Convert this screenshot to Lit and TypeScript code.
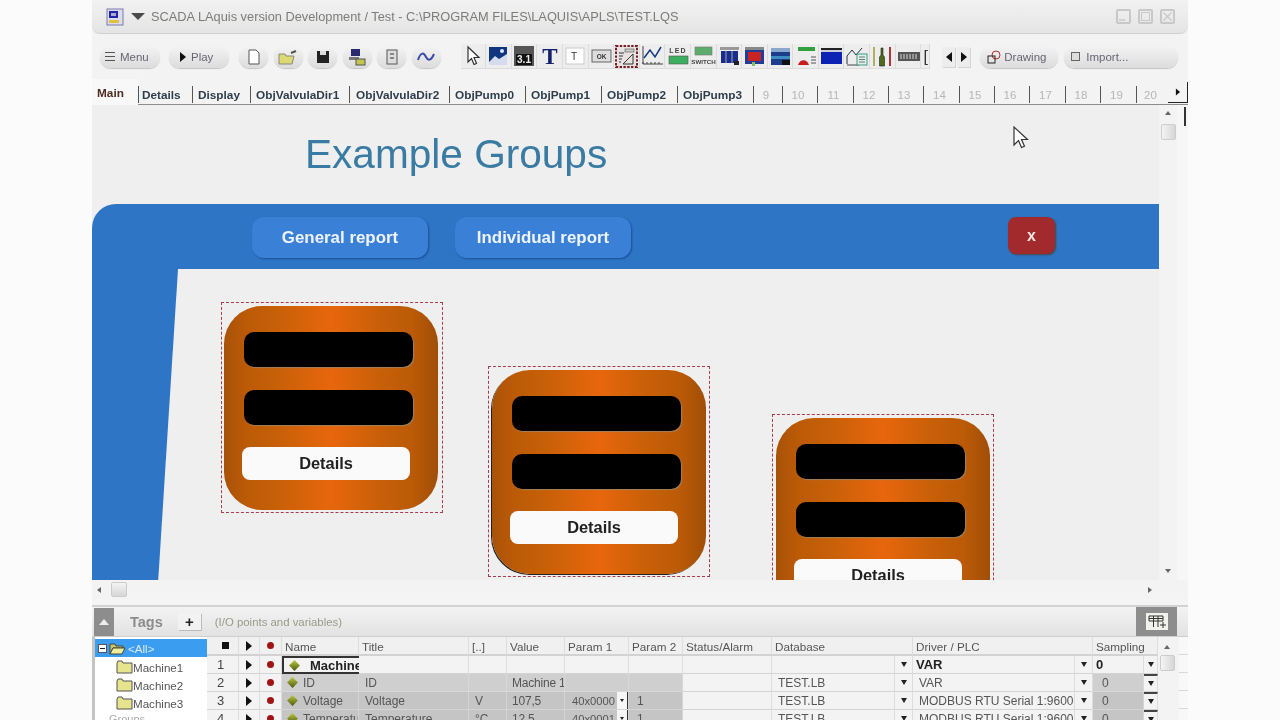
import { LitElement, css, html, svg } from "lit";
import { customElement } from "lit/decorators.js";

// label, tab width, left padding
const tabs: [string, number, number][] = [
  ["Details", 54, 3], ["Display", 58, 5], ["ObjValvulaDir1", 99, 5], ["ObjValvulaDir2", 100, 6],
  ["ObjPump0", 76, 5], ["ObjPump1", 76, 5], ["ObjPump2", 76, 5], ["ObjPump3", 76, 5],
];
const numTabs: [string, number][] = [
  ["9", 29], ["10", 35], ["11", 36], ["12", 35], ["13", 35], ["14", 36],
  ["15", 35], ["16", 35], ["17", 36], ["18", 35], ["19", 36], ["20", 32],
];

const icons = [
  svg`<path d="M6 2v15l3.5-3.5 2.5 6 2.5-1-2.5-6h5z" fill="#fff" stroke="#333" stroke-width="1.2"/>`,
  svg`<rect x="2" y="2" width="18" height="18" fill="#12357f"/><path d="M2 17l6-6 4 3 8-5v11H2z" fill="#d4dcee"/><circle cx="15" cy="6" r="2" fill="#dfe8ff"/>`,
  svg`<rect x="1" y="1" width="20" height="20" fill="#555"/><rect x="3" y="9" width="16" height="11" fill="#111"/><text x="11" y="18" font-size="10" font-weight="700" text-anchor="middle" fill="#eee" font-family="Liberation Sans">3.1</text>`,
  svg`<text x="11" y="19" font-size="23" font-weight="700" text-anchor="middle" fill="#14206e" font-family="Liberation Serif">T</text>`,
  svg`<rect x="2" y="3" width="18" height="16" fill="#fff" stroke="#ccc"/><text x="10" y="15" font-size="10" text-anchor="middle" fill="#333" font-family="Liberation Sans">T</text>`,
  svg`<rect x="2" y="5" width="19" height="12" fill="#ddd" stroke="#666"/><text x="11.5" y="14" font-size="6.5" font-weight="700" text-anchor="middle" fill="#333" font-family="Liberation Sans">OK</text>`,
  svg`<rect x="1" y="1" width="21" height="21" fill="#e6e2e2" stroke="#7a1c24" stroke-width="2" stroke-dasharray="2.4 1.4"/><path d="M8 19l10-10v10z" fill="none" stroke="#333"/><path d="M4 8h5M4 11h4M4 14h3M4 17h2" stroke="#333"/><rect x="10" y="4" width="9" height="3" fill="#ccc" stroke="#555" stroke-width=".6"/>`,
  svg`<path d="M2 1v18h20" fill="none" stroke="#444"/><path d="M2 19v-2M6 19v-2M10 19v-2M14 19v-2M18 19v-2" stroke="#444"/><path d="M3 13l6-8 5 7 6-10" fill="none" stroke="#123a80" stroke-width="1.5"/>`,
  svg`<text x="11" y="8" font-size="7" font-weight="700" text-anchor="middle" fill="#444" letter-spacing="1.2" font-family="Liberation Sans">LED</text><rect x="2" y="11" width="19" height="8" fill="#3cb060" stroke="#555" stroke-width=".6"/>`,
  svg`<rect x="3" y="2" width="17" height="8" fill="#5cad6b" stroke="#777" stroke-width=".6"/><text x="11.5" y="19" font-size="6.2" font-weight="700" text-anchor="middle" fill="#444" font-family="Liberation Sans">SWITCH</text>`,
  svg`<rect x="2" y="2" width="19" height="3" fill="#999"/><rect x="3" y="6" width="17" height="12" fill="#1a2c8c"/><path d="M8 6v12M14 6v12" stroke="#9ab"/><rect x="16" y="16" width="5" height="4" fill="#222"/>`,
  svg`<rect x="2" y="2" width="19" height="3" fill="#888"/><rect x="2" y="5" width="19" height="14" fill="#223c98"/><rect x="5" y="7" width="13" height="9" fill="#c82424"/><rect x="9" y="17" width="3" height="4" fill="#80c060"/>`,
  svg`<rect x="2" y="3" width="19" height="17" fill="#1c3c8c"/><rect x="2" y="3" width="19" height="4" fill="#8aa8cc"/><rect x="2" y="11" width="19" height="3" fill="#3c8cc0"/><rect x="13" y="15" width="8" height="5" fill="#111"/>`,
  svg`<rect x="3" y="2" width="17" height="4" fill="#30a040"/><path d="M3 20a6 8 0 0 1 11 0z" fill="#c81c1c"/><path d="M16 12h5M16 15h5M16 18h5" stroke="#555"/>`,
  svg`<rect x="1" y="3" width="21" height="2" fill="#222"/><rect x="1" y="5" width="21" height="2" fill="#ccd"/><rect x="1" y="7" width="21" height="12" fill="#0c22b4"/>`,
  svg`<path d="M1 19v-8l5-6 4 5 6-7" fill="none" stroke="#234"/><path d="M1 20h12" stroke="#444"/><rect x="11" y="9" width="10" height="11" fill="#dff0ea" stroke="#3a9a88"/><path d="M13 12h6M13 14.5h6M13 17h6" stroke="#444" stroke-width=".7"/>`,
  svg`<path d="M3 2v19" stroke="#a0a040" stroke-width="1.6"/><path d="M19 2v19" stroke="#a82020" stroke-width="1.8"/><path d="M10 10V3h2v7l1.5 2v9h-5v-9z" fill="#506818" stroke="#222" stroke-width=".6"/>`,
  svg`<rect x="1" y="7" width="22" height="9" fill="#555"/><path d="M4 9v5M7 9v5M10 9v5M13 9v5M16 9v5M19 9v5" stroke="#ddd"/>`,
];

const rows = [
  { n: "2", name: "ID", title: "ID", unit: "", value: "Machine 1", p1: "", p2: "", db: "TEST.LB", driver: "VAR" },
  { n: "3", name: "Voltage", title: "Voltage", unit: "V", value: "107,5", p1: "40x0000", p2: "1", db: "TEST.LB", driver: "MODBUS RTU Serial 1:9600,N" },
  { n: "4", name: "Temperature", title: "Temperature", unit: "°C", value: "12,5", p1: "40x0001", p2: "1", db: "TEST.LB", driver: "MODBUS RTU Serial 1:9600,N" },
];

const folder = (open = false) => html`<svg class="folder" viewBox="0 0 17 14">
  ${open
    ? svg`<path d="M1 3h5l1 2h7v2H4l-3 6z" fill="#c8c860" stroke="#444"/><path d="M4 7h12l-3 6H1z" fill="#eeee9a" stroke="#444"/>`
    : svg`<path d="M1 3l1-2h4l1 2h9v10H1z" fill="#e6e48c" stroke="#555"/>`}
</svg>`;

@customElement("app-root")
export class AppRoot extends LitElement {
  static styles = css`
    :host {
      display: block;
      width: 1280px;
      height: 720px;
      overflow: hidden;
      background: #fbfbfb;
      font-family: "Liberation Sans", Arial, sans-serif;
      color: #333;
    }
    .win {
      width: 1096px;
      height: 720px;
      margin-left: 92px;
      background: #f3f3f3;
      display: flex;
      flex-direction: column;
      overflow: hidden;
      filter: blur(0.4px);
    }
    .title {
      height: 34px;
      flex: none;
      display: flex;
      align-items: center;
      padding: 0 13px 0 14px;
      border-bottom: 1px solid #d0d0d0;
      border-radius: 0 0 8px 8px;
      box-sizing: border-box;
      background: linear-gradient(#f2f2f2, #e4e4e4);
      font-size: 12.8px;
      color: #7c7c78;
    }
    .title .arrow {
      width: 0;
      height: 0;
      margin: 0 6px 0 7px;
      border-left: 7px solid transparent;
      border-right: 7px solid transparent;
      border-top: 7px solid #4a4a4a;
    }
    .title .spacer { flex: 1; }
    .wbtn {
      width: 15px;
      height: 15px;
      margin-left: 7px;
      box-sizing: border-box;
      border: 2px solid #c8c8c8;
      border-radius: 2px;
      display: block;
    }
    .wbtn svg { display: block; width: 11px; height: 11px; }
    .toolbar {
      height: 45px;
      flex: none;
      display: flex;
      align-items: center;
      padding: 0 0 0 8px;
      box-sizing: border-box;
      font-size: 11.5px;
    }
    .pill {
      height: 22px;
      flex: none;
      box-sizing: border-box;
      border-radius: 11px;
      display: flex;
      align-items: center;
      gap: 5px;
      background: linear-gradient(#f3f3f3, #dcdcdc);
      box-shadow: 0 1px 1px #c4c4c4;
      color: #667;
    }
    .menu { width: 60px; padding-left: 5px; margin-right: 9px; }
    .play { width: 60px; padding-left: 11px; margin-right: 10px; }
    .round { width: 29px; margin-right: 5.6px; justify-content: center; }
    .bars { width: 10px; height: 7px; border-top: 1px solid #555; border-bottom: 1px solid #555; position: relative; }
    .bars::after { content: ""; position: absolute; left: 0; right: 0; top: 3px; height: 1px; background: #555; }
    .tri { width: 0; height: 0; border-top: 5px solid transparent; border-bottom: 5px solid transparent; border-left: 6px solid #111; display: block; }
    .tools { display: flex; margin-left: 14px; flex: none; }
    .tool {
      width: 25.6px;
      height: 25px;
      flex: none;
      display: flex;
      align-items: center;
      justify-content: center;
      background: #ededed;
      box-shadow: inset -1px -1px 0 #dcdcdc;
    }
    .tool svg { width: 23px; height: 23px; overflow: visible; }
    .cut { width: 9px; overflow: hidden; font-size: 16px; line-height: 20px; color: #333; }
    .mini { width: 13px; height: 20px; flex: none; display: flex; align-items: center; justify-content: center; background: #ededed; box-shadow: 1px 1px 0 #d4d4d4; }
    .draw { width: 78px; margin-left: 10px; padding-left: 7px; gap: 3px; }
    .import { width: 114px; margin-left: 6px; padding-left: 7px; gap: 6px; }
    .square { width: 7px; height: 7px; border: 1px solid #666; background: #ddd; }
    .tabs {
      height: 26px;
      flex: none;
      display: flex;
      align-items: flex-start;
      border-bottom: 1px solid #8c8c8c;
      box-sizing: border-box;
      font-size: 11.8px;
      font-weight: 700;
      color: #2e3c4c;
    }
    .tab {
      height: 17px;
      margin-top: 7px;
      flex: none;
      box-sizing: border-box;
      border-left: 1px solid #555;
      display: flex;
      align-items: center;
      white-space: nowrap;
    }
    .main {
      width: 46px;
      height: 26px;
      flex: none;
      padding: 7px 0 0 5px;
      box-sizing: border-box;
      color: #4c2c24;
      background: #f8f8f8;
      line-height: 15px;
    }
    .num { justify-content: center; padding-right: 4px; font-weight: 400; color: #b6b6b6; font-size: 11.5px; }
    .next { width: 20px; height: 21px; margin-top: 3px; margin-left: auto; flex: none; border-right: 1px solid #222; border-bottom: 1px solid #222; display: flex; align-items: center; justify-content: center; box-sizing: border-box; }
    .canvas-row { height: 475px; flex: none; display: flex; background: #f7f7f7; }
    .canvas { width: 1067px; flex: none; position: relative; overflow: hidden; background: #efefef; }
    .heading { position: absolute; left: 213px; top: 26px; font-size: 40.6px; color: #3a7ba3; white-space: nowrap; }
    .banner { position: absolute; left: 0; top: 99px; width: 1067px; height: 65px; background: #2e75c6; border-radius: 24px 0 0 0; }
    .side { position: absolute; left: 0; top: 164px; width: 86px; height: 311px; background: #2e75c6; clip-path: polygon(0 0, 100% 0, 77% 100%, 0 100%); }
    .bbtn {
      position: absolute;
      top: 112px;
      height: 41px;
      box-sizing: border-box;
      display: flex;
      align-items: center;
      justify-content: center;
      border-radius: 12px;
      background: #3a80d6;
      box-shadow: 1px 1px 2px #1a4f96;
      color: #eef4fa;
      font-weight: 700;
      font-size: 16.9px;
    }
    .close {
      position: absolute;
      left: 916px;
      top: 112px;
      width: 47px;
      height: 37px;
      border-radius: 8px;
      background: #a32a2c;
      box-shadow: 1px 1px 2px #444;
      color: #f2e8e0;
      font-weight: 700;
      font-size: 16px;
      display: flex;
      align-items: center;
      justify-content: center;
    }
    .sel { position: absolute; width: 222px; height: 211px; box-sizing: border-box; border: 1px dashed #a83a50; }
    .card {
      position: absolute;
      top: 3px;
      width: 214px;
      height: 204px;
      border-radius: 38px;
      background: linear-gradient(90deg, #a85208 0%, #bb5a07 10%, #c76008 25%, #e8660d 50%, #c96008 72%, #bb5a07 88%, #a04e08 100%);
    }
    .card.edge { box-shadow: -1px 1px 0 #222; }
    .slot { position: absolute; left: 20px; width: 169px; height: 35px; border-radius: 10px; background: #000; box-shadow: 1px 1px 1px #a08060; }
    .s1 { top: 26px; }
    .s2 { top: 84px; }
    .det {
      position: absolute;
      left: 18px;
      top: 141px;
      width: 168px;
      height: 33px;
      border-radius: 8px;
      background: #fafafa;
      color: #222;
      font-weight: 700;
      font-size: 16.4px;
      display: flex;
      align-items: center;
      justify-content: center;
    }
    .pointer { position: absolute; left: 921px; top: 21px; width: 16px; height: 24px; }
    .vbar { width: 18px; flex: none; display: flex; flex-direction: column; align-items: center; padding: 6px 0 7px; box-sizing: border-box; background: #f3f3f3; }
    .vthumb { width: 15px; height: 16px; margin-top: 9px; box-sizing: border-box; border: 1px solid #ccc; border-radius: 2px; background: linear-gradient(90deg, #f4f4f4, #d6d6d6); }
    .push { margin-top: auto; }
    .mark { width: 2px; height: 19px; margin: 2px 0 0 7px; background: #333; flex: none; }
    .hbar { height: 19px; flex: none; width: 1067px; display: flex; align-items: center; padding: 0 7px 0 5px; box-sizing: border-box; background: #f3f3f3; }
    .hthumb { width: 16px; height: 15px; margin-left: 10px; box-sizing: border-box; border: 1px solid #ccc; border-radius: 2px; background: linear-gradient(#f4f4f4, #d6d6d6); }
    .up, .down, .left, .right { width: 0; height: 0; display: block; flex: none; }
    .up { border-left: 3px solid transparent; border-right: 3px solid transparent; border-bottom: 4px solid #666; }
    .down { border-left: 3px solid transparent; border-right: 3px solid transparent; border-top: 4px solid #666; }
    .left { border-top: 3px solid transparent; border-bottom: 3px solid transparent; border-right: 4px solid #666; }
    .right { border-top: 3px solid transparent; border-bottom: 3px solid transparent; border-left: 4px solid #666; margin-left: auto; }
    .gap { height: 8px; flex: none; border-bottom: 2px solid #d2d2d2; box-sizing: border-box; background: #f4f4f4; }
    .tagbar {
      height: 30px;
      flex: none;
      display: flex;
      align-items: center;
      background: linear-gradient(#f3f3f3, #e2e2e2);
      border-bottom: 1px solid #cfcfcf;
      box-sizing: border-box;
    }
    .collapse { width: 20px; height: 28px; margin-left: 2px; background: #8d8d8d; display: flex; align-items: center; justify-content: center; }
    .collapse i { width: 0; height: 0; border-left: 5px solid transparent; border-right: 5px solid transparent; border-bottom: 6px solid #eee; }
    .tagname { font-size: 14.5px; font-weight: 700; color: #8c8c8c; margin-left: 16px; }
    .plus { width: 23px; height: 17px; margin-left: 15px; background: #f2f2f2; box-shadow: 1px 1px 0 #bbb; display: flex; align-items: center; justify-content: center; font-weight: 700; font-size: 15px; color: #222; }
    .hint { font-size: 11.4px; color: #9a9a88; margin-left: 14px; }
    .gridbtn { margin-left: auto; margin-right: 11px; width: 41px; height: 29px; background: #8d8d8d; display: flex; align-items: center; justify-content: center; }
    .gridbtn svg { width: 22px; height: 17px; background: #f2f2ec; }
    .bottom { flex: 1; display: flex; min-height: 0; }
    .tree { width: 115px; flex: none; background: #fff; border-left: 3px solid #c4c4c4; box-sizing: border-box; padding-top: 2px; font-size: 11.6px; color: #555; }
    .tree-all { height: 18px; margin-bottom: 1px; background: #3b9df0; color: #dfe8f2; display: flex; align-items: center; padding-left: 3px; gap: 2px; }
    .tree-item { height: 18px; display: flex; align-items: center; gap: 0; padding-left: 21px; }
    .tree-item.group { color: #aaa; padding-left: 14px; font-size: 11px; height: 14px; }
    .boxm { width: 9px; height: 9px; flex: none; background: #fff; border: 1px solid #555; position: relative; box-sizing: border-box; }
    .boxm::after { content: ""; position: absolute; left: 1px; right: 1px; top: 3px; height: 1px; background: #222; }
    .folder { width: 17px; height: 14px; flex: none; }
    .table { width: 951px; flex: none; overflow: hidden; font-size: 12px; color: #555; }
    .grid {
      display: grid;
      grid-template-columns: 32px 21px 22px 77px 110px 38px 58px 64px 54px 89px 123px 18px 162px 18px 51px 14px;
      grid-template-rows: 19px;
      grid-auto-rows: 18px;
    }
    .c { display: flex; align-items: center; box-sizing: border-box; white-space: nowrap; overflow: hidden; padding-left: 3px; border-bottom: 1px solid #d4d4d4; border-right: 1px solid #ddd; min-width: 0; }
    .head { color: #555; background: #f0f0f0; border-bottom: 2px solid #d2d2d2; padding-top: 1px; font-size: 11.7px; }
    .g { background: #c5c5c5; border-color: #d4d4d4; }
    .g2 { background: #cfcfcf; border-color: #d8d8d8; }
    .ctr { justify-content: center; padding: 0; }
    .no { padding-left: 10px; color: #444; font-size: 13px; }
    .dot { width: 7px; height: 7px; border-radius: 50%; background: #a01414; flex: none; }
    .gem { width: 9px; height: 9px; margin: 0 6px 0 6px; flex: none; transform: rotate(45deg) scale(.85); background: linear-gradient(135deg, #c0c840, #4a5a10); }
    .stop { width: 7px; height: 7px; background: #111; margin-left: 6px; }
    .sm { width: 0; height: 0; border-top: 5px solid transparent; border-bottom: 5px solid transparent; border-left: 6px solid #111; }
    .dd { width: 0; height: 0; border-left: 3px solid transparent; border-right: 3px solid transparent; border-top: 5px solid #222; flex: none; }
    .ddbox { width: 10px; height: 17px; margin-left: auto; flex: none; background: #f6f6f6; border-right: 1px solid #333; display: flex; align-items: center; justify-content: center; }
    .ddbox .dd { border-width: 3px 2px 0; }
    .ddtop { border-top: 2px solid #444; }
    .p1 { padding-left: 7px; font-size: 11.2px; }
    .pad6 { padding-left: 6px; }
    .value { padding-left: 5px; letter-spacing: -0.2px; }
    .namec { padding-left: 0; }
    .sel-cell { border: 2px solid #333; border-right: none; padding-left: 0; color: #222; font-size: 13px; font-weight: 700; }
    .sel-cell .gem { margin-right: 11px; }
    .b { font-weight: 700; color: #222; font-size: 13px; }
    .tscroll { width: 18px; flex: none; display: flex; flex-direction: column; align-items: center; padding-top: 8px; box-sizing: border-box; background: #f3f3f3; }
    .tscroll .vthumb { margin-top: 6px; }
    .ticks { flex: 1; margin: 0 0 0 3px; background: repeating-linear-gradient(#f8f8f8 0 17px, #d8d8d8 17px 18px); }
  `;

  private card(left: number, top: number, cardLeft: number, edge = false) {
    return html`<div class="sel" style="left:${left}px;top:${top}px">
      <div class="card ${edge ? "edge" : ""}" style="left:${cardLeft}px">
        <div class="slot s1"></div>
        <div class="slot s2"></div>
        <div class="det">Details</div>
      </div>
    </div>`;
  }

  private row(r: (typeof rows)[number], shade: string) {
    return html`
      <div class="c no">${r.n}</div>
      <div class="c ctr"><i class="sm"></i></div>
      <div class="c ctr"><i class="dot"></i></div>
      <div class="c namec ${shade}"><i class="gem"></i>${r.name}</div>
      <div class="c pad6 ${shade}">${r.title}</div>
      <div class="c pad6 ${shade}">${r.unit}</div>
      <div class="c value ${shade}">${r.value}</div>
      <div class="c p1 ${shade}">${r.p1}${r.p1 ? html`<span class="ddbox"><i class="dd"></i></span>` : ""}</div>
      <div class="c pad6 ${shade}" style="padding-left:8px">${r.p2}</div>
      <div class="c"></div>
      <div class="c pad6">${r.db}</div>
      <div class="c ctr"><i class="dd"></i></div>
      <div class="c pad6">${r.driver}</div>
      <div class="c ctr"><i class="dd"></i></div>
      <div class="c ${shade}" style="padding-left:9px">0</div>
      <div class="c ctr ddtop"><i class="dd"></i></div>
    `;
  }

  render() {
    return html`<div class="win">
      <div class="title">
        <svg width="18" height="18" viewBox="0 0 18 18"><rect x="1" y="1" width="16" height="16" fill="#dcdcee" stroke="#7a7ab0"/><rect x="3" y="3" width="9" height="7" fill="#2424a8"/><rect x="5" y="5" width="5" height="3" fill="#aac"/><rect x="3" y="12" width="10" height="3" fill="#e0c040"/></svg>
        <i class="arrow"></i>
        <span>SCADA LAquis version Development / Test - C:\\PROGRAM FILES\\LAQUIS\\APLS\\TEST.LQS</span>
        <span class="spacer"></span>
        <i class="wbtn"><svg viewBox="0 0 11 11"><path d="M1 9h6" stroke="#c8c8c8" stroke-width="1.5"/></svg></i>
        <i class="wbtn"><svg viewBox="0 0 11 11"><rect x="1.5" y="1.5" width="8" height="8" fill="none" stroke="#c8c8c8"/></svg></i>
        <i class="wbtn"><svg viewBox="0 0 11 11"><path d="M1.5 1.5l8 8M9.5 1.5l-8 8" stroke="#c8c8c8" stroke-width="1.2"/></svg></i>
      </div>
      <div class="toolbar">
        <div class="pill menu"><i class="bars"></i>Menu</div>
        <div class="pill play"><i class="tri"></i>Play</div>
        <div class="pill round"><svg width="14" height="16" viewBox="0 0 14 16"><path d="M2 1h7l3 3v11H2z" fill="#fff" stroke="#555"/></svg></div>
        <div class="pill round"><svg width="20" height="16" viewBox="0 0 20 16"><path d="M1 5h6l1 2h8l-2 8H1z" fill="#dcd873" stroke="#887"/><path d="M13 4l5-2" stroke="#555" stroke-width="2"/></svg></div>
        <div class="pill round"><svg width="14" height="14" viewBox="0 0 14 14"><rect x="1" y="1" width="12" height="12" fill="#222"/><rect x="4" y="1" width="6" height="4" fill="#ddd"/></svg></div>
        <div class="pill round"><svg width="18" height="18" viewBox="0 0 18 18"><rect x="3" y="1" width="9" height="7" fill="#2a2a70"/><rect x="1" y="9" width="10" height="3" fill="#777"/><rect x="8" y="11" width="9" height="6" fill="#c4c450" stroke="#555"/></svg></div>
        <div class="pill round"><svg width="14" height="16" viewBox="0 0 14 16"><rect x="2" y="1" width="10" height="14" fill="#ddd" stroke="#555"/><path d="M5 5h4M5 9h4" stroke="#333"/></svg></div>
        <div class="pill round"><svg width="20" height="12" viewBox="0 0 20 12"><path d="M2 9c3-9 6-7 8-3s5 4 8-3" fill="none" stroke="#3a4aa8" stroke-width="2"/></svg></div>
        <div class="tools">
          ${icons.map((i) => html`<div class="tool"><svg viewBox="0 0 23 23">${i}</svg></div>`)}
          <div class="tool cut">[</div>
        </div>
        <div class="mini" style="margin-left:12px"><i class="tri" style="transform:scaleX(-1)"></i></div>
        <div class="mini" style="margin-left:2px"><i class="tri"></i></div>
        <div class="pill draw"><svg width="14" height="14" viewBox="0 0 14 14"><circle cx="9" cy="5" r="4" fill="none" stroke="#b03030"/><rect x="1" y="6" width="7" height="7" fill="none" stroke="#222"/></svg>Drawing</div>
        <div class="pill import"><i class="square"></i>Import...</div>
      </div>
      <div class="tabs">
        <div class="main">Main</div>
        ${tabs.map(([t, w, p]) => html`<div class="tab" style="width:${w}px;padding-left:${p}px">${t}</div>`)}
        ${numTabs.map(([t, w]) => html`<div class="tab num" style="width:${w}px">${t}</div>`)}
        <div class="next"><i class="tri" style="transform:scale(.7)"></i></div>
      </div>
      <div class="canvas-row">
        <div class="canvas">
          <div class="heading">Example Groups</div>
          <div class="banner"></div>
          <div class="side"></div>
          <div class="bbtn" style="left:160px;width:176px">General report</div>
          <div class="bbtn" style="left:363px;width:176px">Individual report</div>
          <div class="close">x</div>
          ${this.card(129, 197, 2)}
          ${this.card(396, 261, 3, true)}
          ${this.card(680, 309, 3)}
          <svg class="pointer" viewBox="0 0 16 24"><path d="M1 1v18l4.500-4.500 3 7 3-1.300-3-6.700h6z" fill="#fff" stroke="#333" stroke-width="1.200"/></svg>
        </div>
        <div class="vbar">
          <i class="up"></i>
          <div class="vthumb"></div>
          <i class="down push"></i>
        </div>
        <div class="mark"></div>
      </div>
      <div class="hbar">
        <i class="left"></i>
        <div class="hthumb"></div>
        <i class="right"></i>
      </div>
      <div class="gap"></div>
      <div class="tagbar">
        <div class="collapse"><i></i></div>
        <span class="tagname">Tags</span>
        <div class="plus">+</div>
        <span class="hint">(I/O points and variables)</span>
        <div class="gridbtn"><svg viewBox="0 0 22 17"><path d="M3 3h14v5H3zM3 5.500h14M7.500 3v11M12 3v11M14 12h6M17 9v6" fill="none" stroke="#333"/></svg></div>
      </div>
      <div class="bottom">
        <div class="tree">
          <div class="tree-all"><i class="boxm"></i>${folder(true)}&lt;All&gt;</div>
          <div class="tree-item">${folder()}Machine1</div>
          <div class="tree-item">${folder()}Machine2</div>
          <div class="tree-item">${folder()}Machine3</div>
          <div class="tree-item group">Groups</div>
        </div>
        <div class="table">
          <div class="grid">
            <div class="c ctr head"><i class="stop"></i></div>
            <div class="c ctr head"><i class="sm"></i></div>
            <div class="c ctr head"><i class="dot"></i></div>
            <div class="c head">Name</div>
            <div class="c head">Title</div>
            <div class="c head">[..]</div>
            <div class="c head">Value</div>
            <div class="c head">Param 1</div>
            <div class="c head">Param 2</div>
            <div class="c head">Status/Alarm</div>
            <div class="c head" style="grid-column:span 2">Database</div>
            <div class="c head" style="grid-column:span 2">Driver / PLC</div>
            <div class="c head" style="grid-column:span 2">Sampling</div>

            <div class="c no">1</div>
            <div class="c ctr"><i class="sm"></i></div>
            <div class="c ctr"><i class="dot"></i></div>
            <div class="c sel-cell"><i class="gem"></i>Machine1</div>
            <div class="c"></div><div class="c"></div><div class="c"></div><div class="c"></div><div class="c"></div><div class="c"></div>
            <div class="c"></div>
            <div class="c ctr"><i class="dd"></i></div>
            <div class="c b">VAR</div>
            <div class="c ctr"><i class="dd"></i></div>
            <div class="c b">0</div>
            <div class="c ctr"><i class="dd"></i></div>
            ${rows.map((r, i) => this.row(r, i === 0 ? "g2" : "g"))}
          </div>
        </div>
        <div class="tscroll">
          <i class="up"></i>
          <div class="vthumb"></div>
        </div>
        <div class="ticks"></div>
      </div>
    </div>`;
  }
}
